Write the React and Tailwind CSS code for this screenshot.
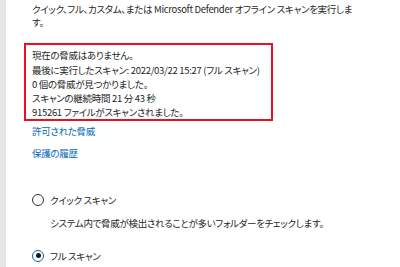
export default function App() {
  const font = "font-['Noto_Sans_CJK_JP','Noto_Sans',sans-serif] [font-feature-settings:'palt']"
  return (
    <div className={`flex h-[267px] w-[400px] overflow-hidden bg-white text-[9.5px] tracking-[-0.3px] text-[#262626] ${font}`}>
      <div className="w-[6px] shrink-0 bg-[#e6e6e6]" />
      <div className="flex-1 pl-[26px] pt-[3px]">
        <p className="w-[330px] leading-[13px]">
          クイック、フル、カスタム、または Microsoft Defender オフライン スキャンを実行します。
        </p>

        <div className="-ml-[8px] mt-[14px] w-[249px] whitespace-nowrap border-2 border-[#e81123] px-[6px] pb-[0px] pt-[3px] leading-[14px]">
          <p className="mb-[1px]">現在の脅威はありません。</p>
          <p>最後に実行したスキャン: 2022/03/22 15:27 (フル スキャン)</p>
          <p>0 個の脅威が見つかりました。</p>
          <p>スキャンの継続時間 21 分 43 秒</p>
          <p>915261 ファイルがスキャンされました。</p>
        </div>

        <div className="mt-[3px] flex flex-col items-start gap-[8px] leading-[14px] text-[#0067b8]">
          <a>許可された脅威</a>
          <a>保護の履歴</a>
        </div>

        <div className="mt-[33px] flex items-center gap-[6px]">
          <span className="h-[12px] w-[12px] rounded-full border-[1.5px] border-[#333]" />
          <span>クイック スキャン</span>
        </div>
        <p className="mt-[9px] pl-[18px]">システム内で脅威が検出されることが多いフォルダーをチェックします。</p>

        <div className="mt-[18px] flex items-center gap-[6px]">
          <span className="flex h-[12px] w-[12px] items-center justify-center rounded-full border-[1.5px] border-[#0067c0]">
            <span className="h-[5px] w-[5px] rounded-full bg-[#1a1a1a]" />
          </span>
          <span>フル スキャン</span>
        </div>
      </div>
    </div>
  )
}
